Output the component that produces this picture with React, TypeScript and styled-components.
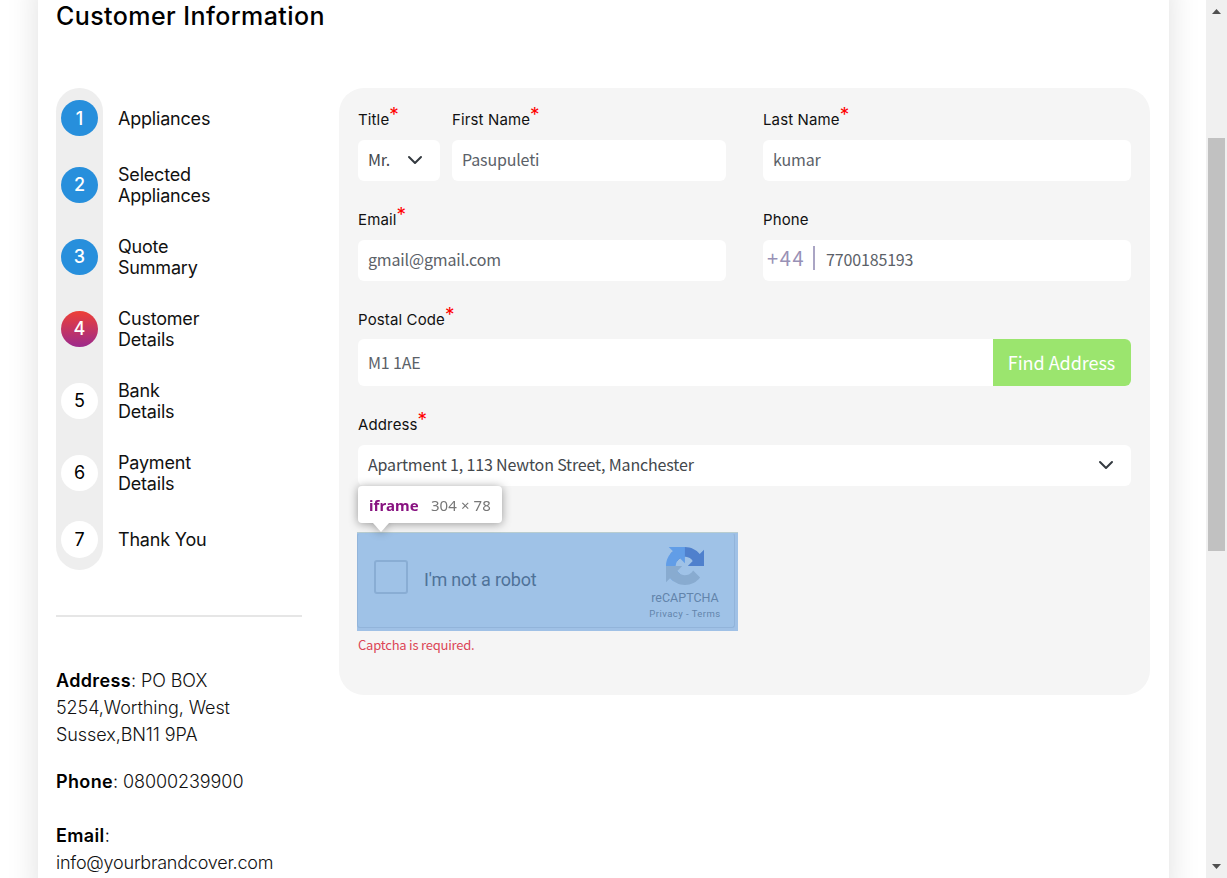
import React from "react";
import styled, { createGlobalStyle } from "styled-components";

const Global = createGlobalStyle`
  * { box-sizing: border-box; }
  html, body { margin: 0; padding: 0; height: 878px; overflow: hidden; background: #fff; }
  body { font-family: Inter, "Liberation Sans", sans-serif; color: #000; }
  button, input, select { font: inherit; }
`;

const sourceSans = `"Noto Sans CJK SC", "Noto Sans", sans-serif`;

const Page = styled.div`
  display: flex;
  width: 1227px;
  height: 878px;
  overflow: hidden;
`;

const Content = styled.div`
  flex: 1;
  padding: 0 37px 0 38px;
  overflow: hidden;
`;

const Card = styled.main`
  height: 920px;
  margin-top: -20px;
  padding: 20px 19px 0 18px;
  background: #fff;
  box-shadow: 0 0 30px rgba(0, 0, 0, 0.13);
`;

const Heading = styled.h1`
  margin: 0;
  height: 88px;
  font-size: 25px;
  font-weight: 500;
  line-height: 32px;
  letter-spacing: 0.42px;
`;

const Columns = styled.div`
  display: flex;
  align-items: flex-start;
  gap: 37px;
`;

const Sidebar = styled.aside`
  width: 246px;
`;

const Steps = styled.div`
  display: flex;
  gap: 15px;
`;

const Rail = styled.ol`
  display: flex;
  flex-direction: column;
  align-items: center;
  gap: 30px;
  width: 47px;
  height: 482px;
  margin: 0;
  padding: 14px 0;
  list-style: none;
  background: #eee;
  border-radius: 24px;
`;

const RailItem = styled.li<{ $tall: boolean }>`
  display: flex;
  align-items: center;
  height: ${(p) => (p.$tall ? 42 : 32)}px;
  &:last-child { height: 31px; }
  &:last-child > span { height: 37px; }
  &:first-child > span { padding-bottom: 0; }
`;

type StepState = "done" | "current" | "todo";

const circleFill: Record<StepState, string> = {
  done: "#278fdc",
  current: "linear-gradient(180deg, #ee4036 0%, #9c2a8c 100%)",
  todo: "#fff",
};

const Circle = styled.span<{ $state: StepState }>`
  display: flex;
  flex: none;
  align-items: center;
  justify-content: center;
  width: 37px;
  height: 36px;
  padding-bottom: 1px;
  border-radius: 50%;
  background: ${(p) => circleFill[p.$state]};
  color: ${(p) => (p.$state === "todo" ? "#000" : "#fff")};
  font-size: 18px;
  font-weight: ${(p) => (p.$state === "todo" ? 400 : 500)};
`;

const StepNames = styled.div`
  display: flex;
  flex-direction: column;
  gap: 30px;
  padding-top: 14px;
`;

const StepName = styled.div<{ $tall: boolean }>`
  display: flex;
  align-items: center;
  width: 98px;
  height: ${(p) => (p.$tall ? 42 : 32)}px;
  font-size: 18px;
  line-height: 21px;
  letter-spacing: -0.2px;
  color: #111;
  &:last-child { height: 31px; }
`;

const Divider = styled.hr`
  height: 2px;
  margin: 45px 0 50px;
  border: 0;
  background: #e6e6e6;
`;

const Contact = styled.p<{ $gap: number; $spacing?: number }>`
  margin: 0 0 ${(p) => p.$gap}px;
  font-size: 18px;
  font-weight: 300;
  line-height: 27px;
  letter-spacing: ${(p) => p.$spacing ?? -0.08}px;
  white-space: nowrap;
  color: #111;
  b { font-weight: 600; color: #000; letter-spacing: 0.35px; }
`;

const Panel = styled.form`
  display: flex;
  flex-direction: column;
  width: 811px;
  height: 607px;
  padding: 21px 19px 0;
  border-radius: 25px;
  background: #f5f5f5;
`;

const Row = styled.div<{ $gap: number }>`
  display: flex;
  gap: ${(p) => p.$gap}px;
`;

const FormRow = styled(Row)`
  margin-bottom: 28px;
`;

const Field = styled.div<{ $width: number }>`
  width: ${(p) => p.$width}px;
`;

const Label = styled.label<{ $height?: number }>`
  display: flex;
  height: ${(p) => p.$height ?? 31}px;
  font-size: 15px;
  line-height: 21px;
  letter-spacing: 0.13px;
  color: #111;
`;

const Required = styled.span`
  margin-top: -3px;
  font-size: 19px;
  line-height: 18px;
  color: #f00;
`;

const Control = styled.div<{ $height?: number }>`
  display: flex;
  align-items: center;
  height: ${(p) => p.$height ?? 41}px;
  padding: 0 0 3px 10px;
  border-radius: 6px;
  background: #fff;
  overflow: hidden;
  font-family: ${sourceSans};
  font-size: 16px;
  line-height: 24px;
  letter-spacing: -0.16px;
  white-space: nowrap;
  color: #5b6168;
  > svg { margin-top: 2px; }
`;

const SearchControl = styled(Control)`
  padding-bottom: 0;
`;

const PostalValue = styled.span`
  margin-top: -2px;
`;

const SelectControl = styled(Control)`
  justify-content: space-between;
  padding-right: 17px;
  color: #43474c;
`;

const Prefix = styled.span`
  display: flex;
  align-items: center;
  gap: 8px;
  margin: -2px 11px 0 -6px;
  font-size: 20px;
  letter-spacing: 1.6px;
  color: #9891b6;
  &::after { content: ""; width: 2px; height: 24px; background: #aaa5c4; }
`;

const FindButton = styled.button`
  align-self: stretch;
  width: 138px;
  margin-left: auto;
  padding: 0 1px 2px 0;
  border: 0;
  background: #9be56e;
  color: #fff;
  font-size: 18px;
  line-height: 24px;
  letter-spacing: -0.05px;
`;

const CaptchaBlock = styled.div`
  position: relative;
  width: 381px;
  margin: 18px 0 0 -1px;
`;

const Tooltip = styled.div`
  position: absolute;
  left: 1px;
  top: -46px;
  display: flex;
  align-items: center;
  gap: 12px;
  width: 144px;
  height: 37px;
  padding-left: 11px;
  border-radius: 4px;
  background: #fff;
  filter: drop-shadow(0 1px 5px rgba(0, 0, 0, 0.38));
  font-family: "Noto Sans", sans-serif;
  font-size: 15px;
  letter-spacing: 0.1px;
  color: #777;
  white-space: nowrap;
  b { color: #881280; }
  &::after {
    content: "";
    position: absolute;
    left: 15px;
    top: 37px;
    border: solid transparent;
    border-width: 9px 8px 0;
    border-top-color: #fff;
  }
`;

const CaptchaOverlay = styled.div`
  height: 99px;
  padding-right: 3px;
  padding-bottom: 3px;
  border-top: 1px solid #b9cdd0;
  background: #a0c1e6;
`;

const CaptchaBox = styled.div`
  display: flex;
  align-items: flex-start;
  height: 95px;
  padding: 0 13px 0 16px;
  border: 1px solid #92b4da;
  border-top-color: #9fc2e7;
  border-radius: 3px;
  background: #9fc2e7;
  font-family: Roboto, sans-serif;
  color: #6284ab;
`;

const Checkbox = styled.span`
  width: 34px;
  height: 34px;
  margin: 26px 16px 0 0;
  border: 2px solid #89add4;
  border-radius: 3px;
`;

const RobotText = styled.span`
  flex: 1;
  margin-top: 35px;
  font-size: 18px;
  line-height: 22px;
  letter-spacing: -0.2px;
  color: #4f7299;
`;

const Brand = styled.div`
  display: flex;
  flex-direction: column;
  align-items: center;
  width: 72px;
  padding-top: 13px;
  font-size: 12.5px;
  line-height: 15px;
  white-space: nowrap;
  svg { margin-bottom: 5px; }
  small { margin-top: 2px; font-size: 9.5px; line-height: 13px; letter-spacing: 0.45px; }
`;

const ErrorText = styled.div`
  margin-top: 3px;
  font-family: ${sourceSans};
  font-size: 13px;
  line-height: 21px;
  letter-spacing: -0.22px;
  color: #dc4656;
`;

const Scrollbar = styled.div`
  display: flex;
  flex-direction: column;
  align-items: center;
  width: 21px;
  padding: 9px 0 9px;
  background: #f0f0f0;
`;

const Thumb = styled.div`
  width: 17px;
  height: 413px;
  margin: 124px 0 auto;
  background: #c1c1c1;
`;

const steps: { label: string; tall: boolean; state: StepState }[] = [
  { label: "Appliances", tall: false, state: "done" },
  { label: "Selected Appliances", tall: true, state: "done" },
  { label: "Quote Summary", tall: true, state: "done" },
  { label: "Customer Details", tall: true, state: "current" },
  { label: "Bank Details", tall: true, state: "todo" },
  { label: "Payment Details", tall: true, state: "todo" },
  { label: "Thank You", tall: false, state: "todo" },
];

const Chevron = () => (
  <svg width="16" height="16" viewBox="0 0 16 16" fill="none" stroke="#343a40" strokeWidth="2" strokeLinecap="round" strokeLinejoin="round">
    <path d="m2 5 6 6 6-6" />
  </svg>
);

const Arrow = ({ up }: { up?: boolean }) => (
  <svg width="9" height="5" viewBox="0 0 9 5" fill="#505050">
    <path d={up ? "M0 5 4.5 0 9 5Z" : "M0 0 4.5 5 9 0Z"} />
  </svg>
);

const RecaptchaLogo = () => (
  <svg width="38" height="38" viewBox="0 0 64 64">
    <path fill="#4f80cd" d="M64 31.955l-.033-1.37V4.687l-7.16 7.16C50.948 4.674 42.033.093 32.05.093c-10.4 0-19.622 4.96-25.458 12.64l11.736 11.86a15.55 15.55 0 0 1 4.754-5.334c2.05-1.6 4.952-2.906 8.968-2.906.485 0 .86.057 1.135.163 4.976.393 9.288 3.14 11.828 7.124l-8.307 8.307L64 31.953" />
    <path fill="#619de7" d="M31.862.094l-1.37.033H4.594l7.16 7.16C4.58 13.147 0 22.06 0 32.046c0 10.4 4.96 19.622 12.64 25.458L24.5 45.768a15.55 15.55 0 0 1-5.334-4.754c-1.6-2.05-2.906-4.952-2.906-8.968 0-.485.057-.86.163-1.135.393-4.976 3.14-9.288 7.124-11.828l8.307 8.307L31.86.095" />
    <path fill="#88abd0" d="M.001 32.045l.033 1.37v25.898l7.16-7.16c5.86 7.173 14.774 11.754 24.76 11.754 10.4 0 19.622-4.96 25.458-12.64l-11.736-11.86a15.55 15.55 0 0 1-4.754 5.334c-2.05 1.6-4.952 2.906-8.968 2.906-.485 0-.86-.057-1.135-.163-4.976-.393-9.288-3.14-11.828-7.124l8.307-8.307c-10.522.04-22.4.066-27.295-.005" />
  </svg>
);

const FieldLabel = ({ text, required = true, height }: { text: string; required?: boolean; height?: number }) => (
  <Label $height={height}>
    {text}
    {required && <Required>*</Required>}
  </Label>
);

export default function App() {
  return (
    <>
      <Global />
      <Page>
        <Content>
          <Card>
            <Heading>Customer Information</Heading>
            <Columns>
              <Sidebar>
                <Steps>
                  <Rail>
                    {steps.map((s, i) => (
                      <RailItem key={s.label} $tall={s.tall}>
                        <Circle $state={s.state}>{i + 1}</Circle>
                      </RailItem>
                    ))}
                  </Rail>
                  <StepNames>
                    {steps.map((s) => (
                      <StepName key={s.label} $tall={s.tall}>{s.label}</StepName>
                    ))}
                  </StepNames>
                </Steps>
                <Divider />
                <Contact $gap={20}>
                  <b>Address</b>: PO BOX<br />5254,Worthing, West<br />Sussex,BN11 9PA
                </Contact>
                <Contact $gap={27}><b>Phone</b>: 08000239900</Contact>
                <Contact $gap={0} $spacing={-0.22}><b>Email</b>:<br />info@yourbrandcover.com</Contact>
              </Sidebar>
              <Panel>
                <FormRow $gap={37}>
                  <Row $gap={12}>
                    <Field $width={82}>
                      <FieldLabel text="Title" />
                      <SelectControl>Mr.<Chevron /></SelectControl>
                    </Field>
                    <Field $width={274}>
                      <FieldLabel text="First Name" />
                      <Control>Pasupuleti</Control>
                    </Field>
                  </Row>
                  <Field $width={368}>
                    <FieldLabel text="Last Name" />
                    <Control>kumar</Control>
                  </Field>
                </FormRow>
                <FormRow $gap={37}>
                  <Field $width={368}>
                    <FieldLabel text="Email" />
                    <Control>gmail@gmail.com</Control>
                  </Field>
                  <Field $width={368}>
                    <FieldLabel text="Phone" required={false} />
                    <Control><Prefix>+44</Prefix>7700185193</Control>
                  </Field>
                </FormRow>
                <FormRow $gap={0}>
                  <Field $width={773}>
                    <FieldLabel text="Postal Code" height={30} />
                    <SearchControl $height={47}>
                      <PostalValue>M1 1AE</PostalValue>
                      <FindButton type="button">Find Address</FindButton>
                    </SearchControl>
                  </Field>
                </FormRow>
                <Field $width={773}>
                  <FieldLabel text="Address" />
                  <SelectControl>Apartment 1, 113 Newton Street, Manchester<Chevron /></SelectControl>
                </Field>
                <Field $width={773}>
                  <FieldLabel text="" required={false} height={28} />
                  <CaptchaBlock>
                    <CaptchaOverlay>
                      <CaptchaBox>
                        <Checkbox />
                        <RobotText>I'm not a robot</RobotText>
                        <Brand>
                          <RecaptchaLogo />
                          reCAPTCHA
                          <small>Privacy - Terms</small>
                        </Brand>
                      </CaptchaBox>
                    </CaptchaOverlay>
                    <Tooltip><b>iframe</b>304 × 78</Tooltip>
                  </CaptchaBlock>
                  <ErrorText>Captcha is required.</ErrorText>
                </Field>
              </Panel>
            </Columns>
          </Card>
        </Content>
        <Scrollbar>
          <Arrow up />
          <Thumb />
          <Arrow />
        </Scrollbar>
      </Page>
    </>
  );
}
